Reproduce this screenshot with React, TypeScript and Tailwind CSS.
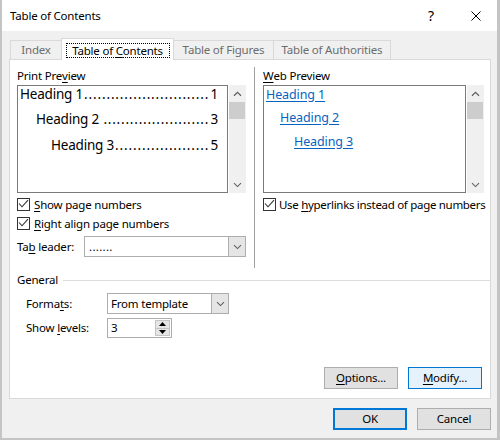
import React from "react";

function Check() {
  return (
    <span className="w-[13px] h-[13px] border border-[#333333] bg-white shrink-0 block">
      <svg width="11" height="11" viewBox="0 0 11 11" className="block">
        <path d="M1 4.5 L4 7.8 L10 1.2" stroke="#333333" strokeWidth="1.1" fill="none" />
      </svg>
    </span>
  );
}

function ChevDown({ color = "#606060" }: { color?: string }) {
  return (
    <svg width="9" height="6" viewBox="0 0 9 6" className="block">
      <path d="M1 1.2 L4.5 4.6 L8 1.2" stroke={color} strokeWidth="1.1" fill="none" />
    </svg>
  );
}

function ChevUp({ color = "#606060" }: { color?: string }) {
  return (
    <svg width="9" height="6" viewBox="0 0 9 6" className="block">
      <path d="M1 4.8 L4.5 1.4 L8 4.8" stroke={color} strokeWidth="1.3" fill="none" />
    </svg>
  );
}

function VScroll() {
  return (
    <div className="w-[17px] h-full bg-[#f0f0f0] flex flex-col">
      <div className="h-[17px] flex items-center justify-center">
        <ChevUp />
      </div>
      <div className="h-[17px] w-[16px] bg-[#cdcdcd]" />
      <div className="flex-1" />
      <div className="h-[17px] flex items-center justify-center">
        <ChevDown />
      </div>
    </div>
  );
}

function TocRow({ label, num, dots, pl, mt }: { label: string; num: string; dots: number; pl: string; mt: string }) {
  return (
    <div className={`flex h-[18px] items-center whitespace-nowrap text-[13.5px] tracking-[-0.2px] pr-[9px] ${pl} ${mt}`}>
      <span className="shrink-0">{label}</span>
      <span className="flex-1 min-w-0 flex justify-between pl-px pr-[2px]">
        {Array.from({ length: dots }).map((_, i) => (
          <span key={i}>.</span>
        ))}
      </span>
      <span className="shrink-0">{num}</span>
    </div>
  );
}

export default function App() {
  return (
    <div className="w-[500px] h-[440px] bg-[#f0f0f0] border-l-2 border-r-[3px] border-b-2 border-[#c4c4c4] flex flex-col font-['Noto_Sans',sans-serif] text-[11.5px] tracking-[-0.2px] text-black leading-none">
      {/* Title bar */}
      <div className="h-[31px] bg-white flex items-center pl-[8px] shrink-0">
        <span>Table of Contents</span>
        <span className="ml-auto text-[14px]">?</span>
        <svg className="ml-[37px] mr-[16px] block" width="10" height="10" viewBox="0 0 10 10">
          <path d="M0.5 0.5 L9.5 9.5 M9.5 0.5 L0.5 9.5" stroke="#000" strokeWidth="1" />
        </svg>
      </div>

      {/* Tabs */}
      <div className="flex items-end h-[21px] mt-[7px] ml-[8px] relative z-10 shrink-0">
        <div className="w-[51px] h-[19px] border-t border-l border-[#d9d9d9] flex items-center justify-center text-[#6d6d6d]">
          Index
        </div>
        <div className="w-[113px] h-[22px] -mb-px bg-white border border-b-0 border-[#d9d9d9] flex items-start justify-center pt-[4px]">
          <span className="border border-dotted border-black h-[15px] w-[104px] flex items-center justify-center">
            Table of&nbsp;<u className="underline-offset-2">C</u>ontents
          </span>
        </div>
        <div className="w-[100px] h-[19px] border-t border-r border-[#d9d9d9] flex items-center justify-center text-[#6d6d6d]">
          Table of Figures
        </div>
        <div className="w-[117px] h-[19px] border-t border-r border-[#d9d9d9] flex items-center justify-center text-[#6d6d6d]">
          Table of Authorities
        </div>
      </div>

      {/* Panel */}
      <div className="ml-[7px] w-[482px] h-[340px] bg-white border border-[#d9d9d9] pl-[7px] pt-[8px] flex flex-col shrink-0">
        <div className="flex h-[200px] shrink-0">
          {/* Left column */}
          <div className="w-[229px] flex flex-col">
            <div className="h-[16px] flex items-center">
              Print Pre<u className="underline-offset-2">v</u>iew
            </div>
            <div className="mt-[1px] h-[108px] flex gap-[1px]">
              <div className="w-[211px] h-full border border-[#7a7a7a] bg-white pl-[2px]">
                <TocRow label="Heading 1" num="1" dots={28} pl="pl-0" mt="mt-0" />
                <TocRow label={"Heading 2\u00a0"} num="3" dots={24} pl="pl-[16px]" mt="mt-[7px]" />
                <TocRow label="Heading 3" num="5" dots={21} pl="pl-[31px]" mt="mt-[8px]" />
              </div>
              <VScroll />
            </div>
            <div className="mt-[2px] h-[19px] flex items-center">
              <Check />
              <span className="ml-[4px]">
                <u className="underline-offset-2">S</u>how page numbers
              </span>
            </div>
            <div className="h-[19px] flex items-center">
              <Check />
              <span className="ml-[4px]">
                <u className="underline-offset-2">R</u>ight align page numbers
              </span>
            </div>
            <div className="mt-[3px] h-[21px] flex items-center">
              <span>
                Ta<u className="underline-offset-2">b</u> leader:
              </span>
              <div className="ml-auto w-[162px] h-full border border-[#adadad] bg-white flex">
                <span className="flex-1 flex items-center pl-[4px] tracking-[0.3px]">.......</span>
                <div className="w-[17px] h-full bg-[#e5e5e5] border-l border-[#adadad] flex items-center justify-center">
                  <ChevDown />
                </div>
              </div>
            </div>
          </div>

          {/* Separator */}
          <div className="ml-[8px] w-px h-[201px] -mt-px bg-[#a0a0a0]" />

          {/* Right column */}
          <div className="ml-[8px] w-[224px] flex flex-col">
            <div className="h-[16px] flex items-center">
              <u className="underline-offset-2">W</u>eb Preview
            </div>
            <div className="mt-[1px] h-[108px] flex gap-[1px]">
              <div className="w-[203px] h-full border border-[#7a7a7a] bg-white pl-[2px] text-[12.5px] tracking-[-0.1px] text-[#0563c1]">
                <div className="h-[18px] flex items-center">
                  <span className="underline underline-offset-2">Heading 1</span>
                </div>
                <div className="h-[18px] flex items-center mt-[5px] pl-[14px]">
                  <span className="underline underline-offset-2">Heading 2</span>
                </div>
                <div className="h-[18px] flex items-center mt-[6px] pl-[28px]">
                  <span className="underline underline-offset-2">Heading 3</span>
                </div>
              </div>
              <VScroll />
            </div>
            <div className="mt-[2px] h-[19px] flex items-center whitespace-nowrap">
              <Check />
              <span className="ml-[3px] tracking-[-0.3px]">
                Use <u className="underline-offset-2">h</u>yperlinks instead of page numbers
              </span>
            </div>
          </div>
        </div>

        {/* General */}
        <div className="mt-[4px] h-[16px] flex items-center shrink-0">
          <span>General</span>
          <div className="flex-1 ml-[5px] h-px bg-[#dcdcdc]" />
        </div>
        <div className="mt-[5px] h-[21px] flex items-center pl-[9px] shrink-0">
          <span className="w-[81px]">
            Forma<u className="underline-offset-2">t</u>s:
          </span>
          <div className="w-[122px] h-full border border-[#adadad] bg-white flex">
            <span className="flex-1 flex items-center pl-[3px]">From template</span>
            <div className="w-[17px] h-full bg-[#e5e5e5] border-l border-[#adadad] flex items-center justify-center">
              <ChevDown />
            </div>
          </div>
        </div>
        <div className="mt-[4px] h-[20px] flex items-center pl-[9px] shrink-0">
          <span className="w-[81px]">
            Show <u className="underline-offset-2">l</u>evels:
          </span>
          <div className="w-[65px] h-full border border-[#adadad] bg-white flex">
            <span className="flex-1 flex items-center pl-[3px]">3</span>
            <div className="w-[16px] h-full flex flex-col py-px pr-px">
              <div className="flex-1 bg-[#e5e5e5] border border-[#c4c4c4] flex items-center justify-center">
                <svg width="7" height="4" viewBox="0 0 7 4" className="block">
                  <path d="M0 4 L3.5 0 L7 4 Z" fill="#000" />
                </svg>
              </div>
              <div className="flex-1 bg-[#e5e5e5] border border-t-0 border-[#c4c4c4] flex items-center justify-center">
                <svg width="7" height="4" viewBox="0 0 7 4" className="block">
                  <path d="M0 0 L3.5 4 L7 0 Z" fill="#000" />
                </svg>
              </div>
            </div>
          </div>
        </div>

        <div className="mt-[29px] h-[22px] flex justify-end gap-[10px] pr-[8px] shrink-0">
          <button className="w-[74px] h-full bg-[#e1e1e1] border border-[#adadad] flex items-center justify-center">
            <span>
              <u className="underline-offset-2">O</u>ptions...
            </span>
          </button>
          <button className="w-[74px] h-full bg-[#e5f1fb] border border-[#0078d7] flex items-center justify-center">
            <span>
              <u className="underline-offset-2">M</u>odify...
            </span>
          </button>
        </div>
      </div>

      {/* Bottom buttons */}
      <div className="mt-[9px] h-[22px] flex justify-end gap-[10px] pr-[6px] shrink-0">
        <button className="w-[74px] h-full bg-[#e1e1e1] border-2 border-[#0078d7] flex items-center justify-center">
          OK
        </button>
        <button className="w-[74px] h-full bg-[#e1e1e1] border border-[#adadad] flex items-center justify-center">
          Cancel
        </button>
      </div>
    </div>
  );
}
